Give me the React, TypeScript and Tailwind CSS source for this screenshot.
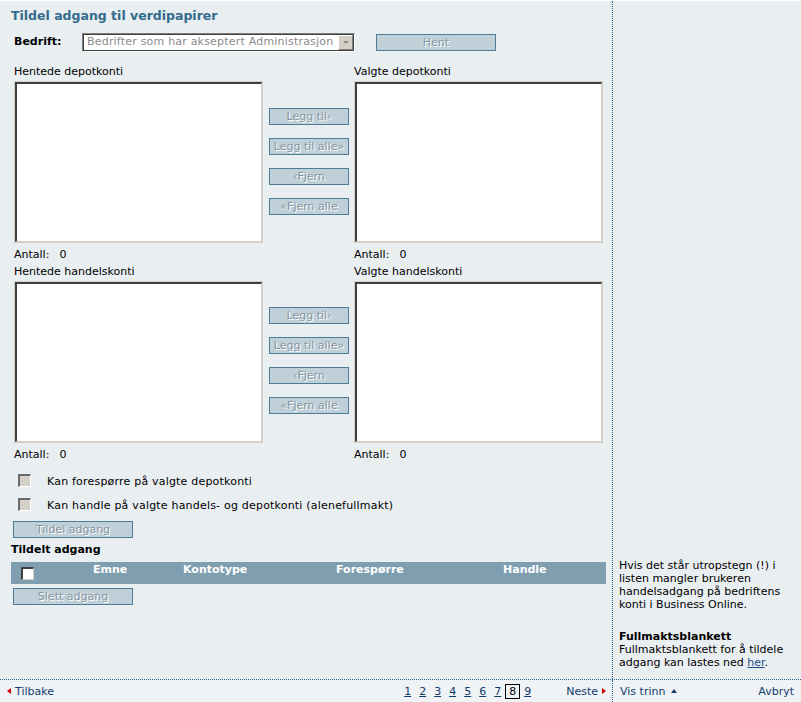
import React from 'react';

const font = { fontFamily: '"DejaVu Sans", Verdana, sans-serif' };

function Knapp({ label, className = '' }: { label: string; className?: string }) {
  return (
    <div
      className={`flex items-center justify-center border border-[#4d7b98] bg-[#bfd0d9] text-[11px] leading-[13px] text-[#8796a1] [text-shadow:1px_1px_0_#ffffff] ${className}`}
    >
      {label}
    </div>
  );
}

function Liste() {
  return (
    <div className="w-[249px] h-[162px] border border-[#d4d0c8]">
      <div className="w-full h-full bg-white border-t-2 border-l-2 border-b border-r border-t-[#404040] border-l-[#404040] border-b-[#d4d0c8] border-r-[#d4d0c8]" />
    </div>
  );
}

function Flytteknapper({ top }: { top: string }) {
  return (
    <div className={`ml-[6px] w-[80px] flex flex-col gap-[13px] ${top}`}>
      <Knapp label="Legg til›" className="h-[17px]" />
      <Knapp label="Legg til alle»" className="h-[17px]" />
      <Knapp label="‹Fjern" className="h-[17px]" />
      <Knapp label="«Fjern alle" className="h-[17px]" />
    </div>
  );
}

function Kontovalg({ venstre, hoyre, top }: { venstre: string; hoyre: string; top: string }) {
  return (
    <>
      <div className="mt-[13px] ml-[3px] flex h-[13px] leading-[13px]">
        <span className="w-[340px] shrink-0">{venstre}</span>
        <span>{hoyre}</span>
      </div>
      <div className="mt-[3px] ml-[3px] flex">
        <Liste />
        <Flytteknapper top={top} />
        <div className="ml-[5px]">
          <Liste />
        </div>
      </div>
      <div className="mt-[5px] ml-[3px] flex h-[13px] leading-[13px]">
        <span className="w-[340px] shrink-0">
          Antall:<span className="ml-[10px]">0</span>
        </span>
        <span>
          Antall:<span className="ml-[10px]">0</span>
        </span>
      </div>
    </>
  );
}

function Avkrysning({ label, className = '' }: { label: string; className?: string }) {
  return (
    <div className={`flex items-center h-[13px] ${className}`}>
      <div className="ml-[7px] w-[13px] h-[13px] bg-[#d4d0c8] border-t-2 border-l-2 border-b border-r border-t-[#6a6a6a] border-l-[#6a6a6a] border-b-white border-r-white" />
      <span className="ml-[16px] leading-[13px] pt-[1px] tracking-[0.2px]">{label}</span>
    </div>
  );
}

export default function App() {
  return (
    <div
      className="w-[801px] h-[702px] flex flex-col bg-[#e9eef1] text-black text-[11px] border-t border-white overflow-hidden"
      style={font}
    >
      <div className="flex flex-1">
        {/* Hovedinnhold */}
        <div className="w-[613px] pl-[11px] border-r border-dotted border-[#2b5c87]">
          <h1 className="mt-[7px] h-[16px] text-[12.5px] leading-[16px] font-bold text-[#336b8c]">
            Tildel adgang til verdipapirer
          </h1>

          <div className="mt-[9px] flex items-center h-[19px]">
            <span className="ml-[3px] w-[68px] font-bold">Bedrift:</span>
            <div className="w-[273px] h-[19px] border-t border-l border-[#808080] border-b-white border-r-white border-b border-r">
              <div className="h-full flex items-center bg-white border border-[#404040]">
                <span className="flex-1 pl-[3px] text-[#8a8a8a] whitespace-nowrap overflow-hidden tracking-[0.2px]">
                  Bedrifter som har akseptert Administrasjon
                </span>
                <div className="w-[15px] h-[15px] flex items-center justify-center bg-[#d4d0c8] border border-t-white border-l-white border-b-[#808080] border-r-[#808080]">
                  <div className="w-0 h-0 border-l-[3px] border-r-[3px] border-t-[3px] border-l-transparent border-r-transparent border-t-[#8a8a8a]" />
                </div>
              </div>
            </div>
            <Knapp label="Hent" className="ml-[21px] w-[120px] h-[17px]" />
          </div>

          <Kontovalg venstre="Hentede depotkonti" hoyre="Valgte depotkonti" top="pt-[27px]" />
          <div className="-mt-[9px]" />
          <Kontovalg venstre="Hentede handelskonti" hoyre="Valgte handelskonti" top="pt-[26px]" />

          <Avkrysning label="Kan forespørre på valgte depotkonti" className="mt-[13px]" />
          <Avkrysning label="Kan handle på valgte handels- og depotkonti (alenefullmakt)" className="mt-[11px]" />

          <Knapp label="Tildel adgang" className="mt-[10px] ml-[2px] w-[120px] h-[17px]" />

          <div className="mt-[5px] h-[13px] leading-[13px] font-bold">Tildelt adgang</div>

          <div className="mt-[6px] w-[595px] h-[22px] flex bg-[#7f9fb0] text-white font-bold leading-[13px]">
            <div className="w-[82px] pl-[10px] pt-[5px]">
              <div className="w-[13px] h-[13px] bg-white border-t-2 border-l-2 border-b border-r border-t-[#404040] border-l-[#404040] border-b-[#d4d0c8] border-r-[#d4d0c8]" />
            </div>
            <div className="w-[90px] pt-[1px]">Emne</div>
            <div className="w-[153px] pt-[1px]">Kontotype</div>
            <div className="w-[167px] pt-[1px]">Forespørre</div>
            <div className="pt-[1px]">Handle</div>
          </div>

          <Knapp label="Slett adgang" className="mt-[4px] ml-[2px] w-[120px] h-[17px]" />
        </div>

        {/* Hjelpetekst */}
        <div className="flex-1 flex flex-col justify-end pl-[6px] pb-[10px] leading-[13px]">
          <p>
            Hvis det står utropstegn (!) i<br />
            listen mangler brukeren<br />
            handelsadgang på bedriftens<br />
            konti i Business Online.
          </p>
          <p className="mt-[19px]">
            <span className="font-bold">Fullmaktsblankett</span>
            <br />
            Fullmaktsblankett for å tildele
            <br />
            adgang kan lastes ned <span className="underline text-[#1a4f8a]">her</span>.
          </p>
        </div>
      </div>

      {/* Bunnlinje */}
      <div className="h-[23px] flex bg-[#eff3f6] border-t border-dotted border-[#2b5c87] text-[#123d6b] leading-[13px]">
        <div className="w-[613px] flex items-center border-r border-dotted border-[#2b5c87] pr-[6px]">
          <div className="ml-[7px] w-0 h-0 border-t-[3px] border-b-[3px] border-r-[4px] border-t-transparent border-b-transparent border-r-[#cc0000]" />
          <span className="ml-[4px]">Tilbake</span>
          <div className="flex-1" />
          <div className="flex items-center">
            {['1', '2', '3', '4', '5', '6'].map((n) => (
              <span key={n} className="underline mr-[8px]">
                {n}
              </span>
            ))}
            <span className="underline mr-[4px]">7</span>
            <span className="w-[15px] h-[15px] flex items-center justify-center border border-black text-black">8</span>
            <span className="underline ml-[4px]">9</span>
          </div>
          <span className="ml-[35px]">Neste</span>
          <div className="ml-[4px] w-0 h-0 border-t-[3px] border-b-[3px] border-l-[4px] border-t-transparent border-b-transparent border-l-[#cc0000]" />
        </div>
        <div className="flex-1 flex items-center pl-[7px] pr-[7px]">
          <span>Vis trinn</span>
          <div className="ml-[6px] w-0 h-0 border-l-[3px] border-r-[3px] border-b-[4px] border-l-transparent border-r-transparent border-b-[#123d6b]" />
          <span className="ml-auto">Avbryt</span>
        </div>
      </div>
    </div>
  );
}
